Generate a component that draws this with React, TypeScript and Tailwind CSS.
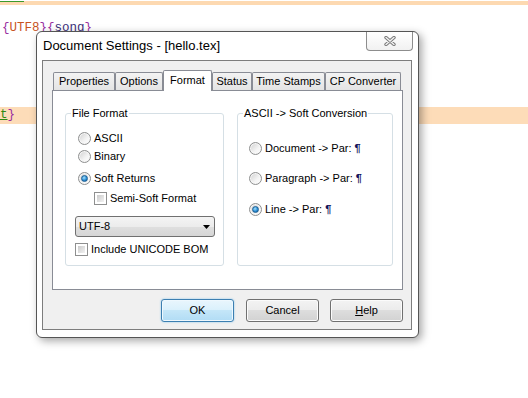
import React from 'react'
import clsx from 'clsx'

function Radio({ checked }: { checked?: boolean }) {
  return (
    <span className="flex h-[13px] w-[13px] shrink-0 items-center justify-center rounded-full border border-[#8e8f8f] bg-[linear-gradient(135deg,#cfcfcf,#f4f4f4_60%,#ffffff)] shadow-[inset_0_0_0_1px_#f6f6f6]">
      {checked && (
        <span className="h-[7px] w-[7px] rounded-full border border-[#1d5f93] bg-[radial-gradient(circle_at_40%_35%,#a6e0fb,#2b8fd6_55%,#0d4f87)]" />
      )}
    </span>
  )
}

function Check() {
  return (
    <span className="flex h-[13px] w-[13px] shrink-0 border border-[#8e8f8f] bg-white p-[2px]">
      <span className="block h-full w-full bg-[linear-gradient(135deg,#cbcbcb,#f2f2f2)]" />
    </span>
  )
}

function Option({ children, checked, className }: { children: React.ReactNode; checked?: boolean; className?: string }) {
  return (
    <div className={clsx('flex h-[13px] items-center gap-[3px]', className)}>
      <Radio checked={checked} />
      <span className="whitespace-nowrap">{children}</span>
    </div>
  )
}

function Button({ children, primary, className }: { children: React.ReactNode; primary?: boolean; className?: string }) {
  return (
    <div
      className={clsx(
        'flex h-[23px] w-[73px] items-center justify-center rounded-[3px] border',
        primary
          ? 'border-[#3c7fb1] bg-[linear-gradient(#e9f6fd,#d9f0fc_50%,#c4e6f8_50%,#b1dcf5)] shadow-[inset_0_0_0_1px_#eef8fe,0_0_2px_#7fc2ec]'
          : 'border-[#707070] bg-[linear-gradient(#f3f3f3,#ebebeb_50%,#dddddd_50%,#d2d2d2)] shadow-[inset_0_0_0_1px_#fbfbfb]',
        className,
      )}
    >
      {children}
    </div>
  )
}

const tabs = [
  { label: 'Properties', w: 'w-[62px]' },
  { label: 'Options', w: 'w-[48px]' },
  { label: 'Format', w: 'w-[49px]', active: true },
  { label: 'Status', w: 'w-[40px]' },
  { label: 'Time Stamps', w: 'w-[73px]' },
  { label: 'CP Converter', w: 'w-[76px]' },
]

export default function App() {
  return (
    <div className="relative h-[398px] w-[528px] overflow-hidden bg-white">
      {/* Editor behind the dialog */}
      <div className="h-[4px] bg-[#fdd9b1]">
        <div className="mt-[1px] h-[1px] w-[24px] bg-[#3c9a2c]" />
      </div>
      <div className="mt-[16px] h-[15px] pl-[2px] font-['Liberation_Mono',monospace] text-[12.5px] leading-[15px] whitespace-pre">
        <span className="text-[#9a2fa0]">{'{'}</span>
        <span className="text-[#c8531e]">UTF8</span>
        <span className="text-[#9a2fa0]">{'}{'}</span>
        <span className="text-[#3b2f7a]">song</span>
        <span className="text-[#9a2fa0]">{'}'}</span>
      </div>
      <div className="mt-[71px] flex h-[17px] items-center bg-[#fddcb8] font-['Liberation_Mono',monospace] text-[12.5px] leading-[15px]">
        <span className="text-[#2e8a12] underline">t</span>
        <span className="text-[#9a2fa0]">{'}'}</span>
      </div>

      {/* Dialog window */}
      <div className="absolute left-[36px] top-[31px] flex h-[307px] w-[383px] flex-col rounded-[6px] border border-[#555555] bg-white font-['Liberation_Sans',Arial,sans-serif] text-[11px] leading-[13px] text-black shadow-[3px_3px_8px_rgba(0,0,0,0.35)]">
        <div className="flex h-[28px] shrink-0 items-start pl-[6px] pr-[5px]">
          <span className="mt-[6px] text-[13px] leading-[15px]">Document Settings - [hello.tex]</span>
          <div className="ml-auto flex h-[19px] w-[47px] items-center justify-center rounded-b-[4px] border border-t-0 border-[#8d8d8d] bg-[linear-gradient(#ffffff,#f1f1f1)]">
            <svg width="12" height="10" viewBox="0 0 12 10">
              <path d="M2 1.5 10 8.5M10 1.5 2 8.5" stroke="#7a7a7a" strokeWidth="3.4" strokeLinecap="round" />
              <path d="M2 1.5 10 8.5M10 1.5 2 8.5" stroke="#f4f4f4" strokeWidth="1.4" strokeLinecap="round" />
            </svg>
          </div>
        </div>

        <div className="mb-[7px] ml-[5px] mr-[6px] flex h-[270px] flex-col border border-[#7d7d7d] bg-[#f0f0f0] pb-[7px] pl-[9px] pr-[8px] pt-[9px]">
          {/* Tabs */}
          <div className="ml-[1px] flex h-[21px] items-end">
            {tabs.map((t) =>
              t.active ? (
                <div
                  key={t.label}
                  className={clsx(
                    'relative z-10 flex h-[21px] justify-center rounded-t-[2px] border border-b-0 border-[#898c95] bg-white pt-[3px]',
                    t.w,
                  )}
                >
                  {t.label}
                </div>
              ) : (
                <div
                  key={t.label}
                  className={clsx(
                    'mb-[1px] flex h-[18px] justify-center rounded-t-[2px] border border-b-0 border-[#898c95] bg-[linear-gradient(#f3f3f3,#e4e4e4)] pt-[2px] whitespace-nowrap',
                    t.w,
                  )}
                >
                  {t.label}
                </div>
              ),
            )}
          </div>

          {/* Panel */}
          <div className="-mt-px flex h-[200px] gap-[13px] border border-[#898c95] bg-white pl-[12px] pr-[9px] pt-[16px]">
            <fieldset className="h-[159px] w-[159px] rounded-[3px] border border-[#d5dfe5]">
              <legend className="ml-[5px] px-[1px] leading-[13px]">File Format</legend>
              <div className="flex flex-col items-start pl-[12px]">
                <Option className="mt-[12px]">ASCII</Option>
                <Option className="mt-[5px]">Binary</Option>
                <Option className="mt-[9px]" checked>
                  Soft Returns
                </Option>
                <div className="ml-[16px] mt-[7px] flex h-[13px] items-center gap-[3px]">
                  <Check />
                  <span>Semi-Soft Format</span>
                </div>
                <div className="-ml-[3px] mt-[11px] flex h-[21px] w-[140px] items-center justify-between rounded-[3px] border border-[#707070] bg-[linear-gradient(#f4f4f4,#ececec_50%,#dfdfdf_50%,#d6d6d6)] pl-[3px] pr-[4px]">
                  <span>UTF-8</span>
                  <svg width="7" height="4" viewBox="0 0 7 4">
                    <path d="M0 0h7L3.5 4z" fill="#000" />
                  </svg>
                </div>
                <div className="-ml-[3px] mt-[6px] flex h-[13px] items-center gap-[3px]">
                  <Check />
                  <span>Include UNICODE BOM</span>
                </div>
              </div>
            </fieldset>

            <fieldset className="h-[159px] w-[156px] rounded-[3px] border border-[#d5dfe5]">
              <legend className="ml-[5px] px-[1px] leading-[13px]">{'ASCII -> Soft Conversion'}</legend>
              <div className="flex flex-col items-start pl-[11px]">
                <Option className="mt-[22px]">
                  {'Document -> Par: '}
                  <span className="font-bold text-[#14145a]">¶</span>
                </Option>
                <Option className="mt-[17px]">
                  {'Paragraph -> Par: '}
                  <span className="font-bold text-[#14145a]">¶</span>
                </Option>
                <Option className="mt-[18px]" checked>
                  {'Line -> Par: '}
                  <span className="font-bold text-[#14145a]">¶</span>
                </Option>
              </div>
            </fieldset>
          </div>

          {/* Buttons */}
          <div className="mt-[9px] flex justify-end">
            <Button primary className="mr-[12px]">
              OK
            </Button>
            <Button className="mr-[11px]">Cancel</Button>
            <Button>
              <span>
                <span className="underline">H</span>elp
              </span>
            </Button>
          </div>
        </div>
      </div>
    </div>
  )
}
